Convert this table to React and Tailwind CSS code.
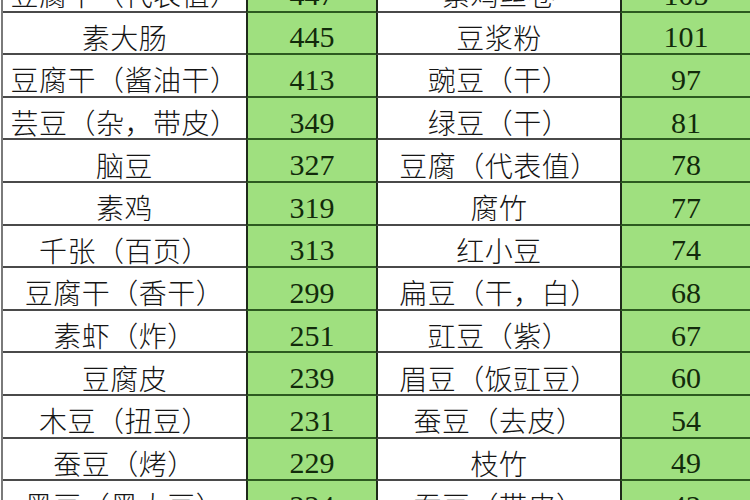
import React from "react";

const rows = [
  ["豆腐干（代表值）", "447", "素鸡丝卷", "105"],
  ["素大肠", "445", "豆浆粉", "101"],
  ["豆腐干（酱油干）", "413", "豌豆（干）", "97"],
  ["芸豆（杂，带皮）", "349", "绿豆（干）", "81"],
  ["脑豆", "327", "豆腐（代表值）", "78"],
  ["素鸡", "319", "腐竹", "77"],
  ["千张（百页）", "313", "红小豆", "74"],
  ["豆腐干（香干）", "299", "扁豆（干，白）", "68"],
  ["素虾（炸）", "251", "豇豆（紫）", "67"],
  ["豆腐皮", "239", "眉豆（饭豇豆）", "60"],
  ["木豆（扭豆）", "231", "蚕豆（去皮）", "54"],
  ["蚕豆（烤）", "229", "枝竹", "49"],
  ["黑豆（黑大豆）", "224", "蚕豆（带皮）", "42"],
];

const nameFont = { fontFamily: '"Noto Sans CJK SC", "Noto Sans", sans-serif' };

function App() {
  return (
    <div className="w-[750px] h-[500px] overflow-hidden bg-white">
      <div className="-mt-[30px] pl-[1px]">
        <div className="border-l-2 border-[#7a7a7a]">
          {rows.map((r, i) => (
            <div key={i} className="flex h-[42.6px]">
              <div
                className="w-[243px] flex items-center justify-center pt-[8px] border-b-2 border-[#4a4a4a] text-[28px] font-light text-[#151515] tracking-[0.5px]"
                style={nameFont}
              >
                {r[0]}
              </div>
              <div className="w-[130px] flex items-center justify-center pt-[8px] border-l-2 border-b-2 border-l-[#1f2a1a] border-b-[#2c5a1f] bg-[#9fe07f] text-[30px] text-[#122a0b] font-['Liberation_Serif',serif]">
                {r[1]}
              </div>
              <div
                className="w-[244px] flex items-center justify-center pt-[8px] border-l-2 border-b-2 border-l-[#1f2a1a] border-b-[#4a4a4a] text-[28px] font-light text-[#151515] tracking-[0.5px]"
                style={nameFont}
              >
                {r[2]}
              </div>
              <div className="flex-1 flex items-center justify-center pt-[8px] border-l-2 border-b-2 border-l-[#1f2a1a] border-b-[#2c5a1f] bg-[#9fe07f] text-[30px] text-[#122a0b] font-['Liberation_Serif',serif]">
                {r[3]}
              </div>
            </div>
          ))}
        </div>
      </div>
    </div>
  );
}

export default App;
